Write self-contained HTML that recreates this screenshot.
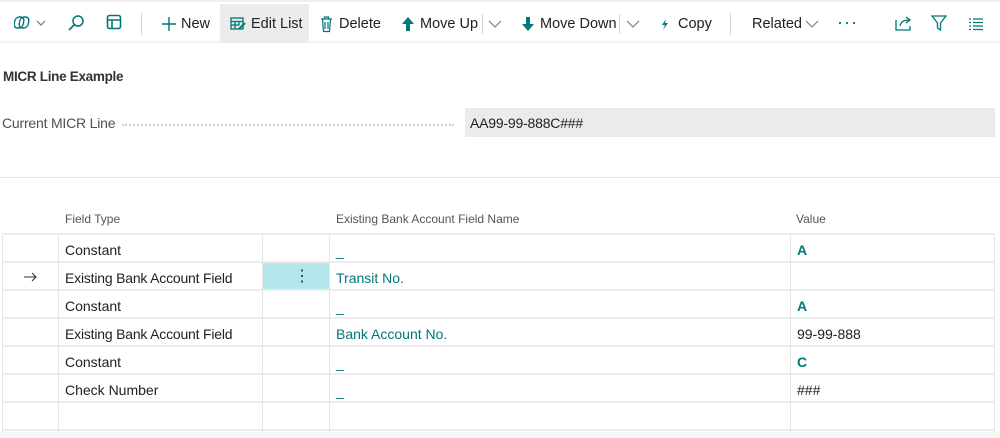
<!DOCTYPE html>
<html><head><meta charset="utf-8"><style>
*{margin:0;padding:0;box-sizing:border-box}
body{width:1000px;height:438px;overflow:hidden;background:#fff;font-family:"Liberation Sans",sans-serif;color:#212121;position:relative}
.a{position:absolute;white-space:nowrap}
.tb{position:absolute;left:0;top:0;width:1000px;height:43px;border-top:2px solid #f0f0f0;border-bottom:2px solid #f3f3f3}
.t{position:absolute;top:14px;font-size:14.5px;color:#212121}
.teal{color:#00777a}
.sep{position:absolute;top:11px;width:1px;height:22px;background:#d6d6d6}
.row{position:absolute;left:2px;width:993px;height:28px;border-bottom:2px solid #ededed}
</style></head><body>
<div class="tb">
 <svg class="a" style="left:14px;top:12px" width="34" height="18" viewBox="0 0 34 18"><g fill="none" stroke="#00777a" stroke-width="1.4"><rect x="2" y="3" width="9" height="11" rx="4" transform="skewX(-10)"/><rect x="7" y="3" width="9" height="11" rx="4" transform="skewX(-10)"/></g><path d="M23 7l4 4 4-4" fill="none" stroke="#777" stroke-width="1.2"/></svg>
 <svg class="a" style="left:67px;top:12px" width="18" height="18"><circle cx="11" cy="7" r="5" fill="none" stroke="#00777a" stroke-width="1.5"/><path d="M7.5 10.5L2 16" stroke="#00777a" stroke-width="1.6"/></svg>
 <svg class="a" style="left:106px;top:12px" width="16" height="17"><rect x="1.5" y="1.5" width="13" height="13" rx="2" fill="none" stroke="#00777a" stroke-width="1.6"/><path d="M1.5 6h13M6 6v8.5" stroke="#00777a" stroke-width="1.6"/></svg>
 <div class="sep" style="left:141px"></div>
 <svg class="a" style="left:161px;top:14px" width="16" height="16"><path d="M8 1v14M1 8h14" stroke="#00777a" stroke-width="1.4"/></svg>
 <div class="t" style="left:181px">New</div>
 <div class="a" style="left:220px;top:2px;width:89px;height:39px;background:#ececec"></div>
 <svg class="a" style="left:230px;top:15px" width="16" height="14"><g stroke="#00777a" stroke-width="1.3" fill="none"><rect x="1" y="1" width="12" height="11"/><path d="M1 4.5h12M1 8h8M5 4.5v7.5M9 4.5v4"/></g><path d="M9 12l6-6" stroke="#00777a" stroke-width="2"/></svg>
 <div class="t" style="left:251px">Edit List</div>
 <svg class="a" style="left:320px;top:14px" width="13" height="17"><g stroke="#00777a" stroke-width="1.2" fill="none"><path d="M1 3h11M4.5 3V1h4v2M2.5 3l1 12.5h6l1-12.5M5 6v7M8 6v7"/></g></svg>
 <div class="t" style="left:339px">Delete</div>
 <svg class="a" style="left:401px;top:14px" width="14" height="16"><path d="M7 1L1 8h4v7h4V8h4z" fill="#00777a"/></svg>
 <div class="t" style="left:420px">Move Up</div>
 <div class="sep" style="left:482px;top:12px;height:20px"></div>
 <svg class="a" style="left:488px;top:17px" width="14" height="10"><path d="M1 2l6 6 6-6" fill="none" stroke="#777" stroke-width="1.1"/></svg>
 <svg class="a" style="left:521px;top:14px" width="14" height="16"><path d="M7 15L1 8h4V1h4v7h4z" fill="#00777a"/></svg>
 <div class="t" style="left:540px">Move Down</div>
 <div class="sep" style="left:619px;top:12px;height:20px"></div>
 <svg class="a" style="left:626px;top:17px" width="14" height="10"><path d="M1 2l6 6 6-6" fill="none" stroke="#777" stroke-width="1.1"/></svg>
 <svg class="a" style="left:660px;top:16px" width="10" height="13"><path d="M6 1L2 7h3L3 12l5-7H5z" fill="#00777a"/></svg>
 <div class="t" style="left:678px">Copy</div>
 <div class="sep" style="left:730px"></div>
 <div class="t" style="left:752px">Related</div>
 <svg class="a" style="left:805px;top:17px" width="14" height="10"><path d="M1 2l6 6 6-6" fill="none" stroke="#777" stroke-width="1.1"/></svg>
 <svg class="a" style="left:838px;top:19px" width="18" height="4"><g fill="#00777a"><circle cx="2" cy="2" r="1.1"/><circle cx="9" cy="2" r="1.1"/><circle cx="16" cy="2" r="1.1"/></g></svg>
 <svg class="a" style="left:895px;top:13px" width="18" height="16"><g fill="none" stroke="#00777a" stroke-width="1.3"><path d="M1 5v10h14v-4"/><path d="M5 11c1-5 5-6 9-6M11 2l4 3-4 3"/></g></svg>
 <svg class="a" style="left:931px;top:13px" width="16" height="17"><path d="M1 1h14l-5.5 7v7l-3-2V8z" fill="none" stroke="#00777a" stroke-width="1.3"/></svg>
 <svg class="a" style="left:968px;top:16px" width="16" height="13"><g stroke="#00777a" stroke-width="1.2"><path d="M1 1h2M5 1h10M1 4.5h2M5 4.5h10M1 8h2M5 8h10M1 11.5h2M5 11.5h10"/></g></svg>
</div>

<div class="a" style="left:3px;top:69px;font-size:13.5px;font-weight:bold;color:#333;letter-spacing:-0.3px">MICR Line Example</div>
<div class="a" style="left:2px;top:115px;font-size:14px;color:#505050;letter-spacing:-0.2px">Current MICR Line</div>
<div class="a" style="left:122px;top:124px;width:332px;border-top:2px dotted #ccc"></div>
<div class="a" style="left:465px;top:108px;width:530px;height:29px;background:#ebebec"></div>
<div class="a" style="left:470px;top:115px;font-size:14px;letter-spacing:-0.2px">AA99-99-888C###</div>
<div class="a" style="left:0;top:177px;width:1000px;height:1px;background:#e3e3e3"></div>

<div class="a" style="left:65px;top:212px;font-size:12px;color:#555">Field Type</div>
<div class="a" style="left:336px;top:212px;font-size:12px;color:#555">Existing Bank Account Field Name</div>
<div class="a" style="left:796px;top:212px;font-size:12px;color:#555">Value</div>

<div class="a" style="left:2px;top:233px;width:993px;height:2px;background:#ededed"></div>
<div class="a" style="left:0;top:432px;width:1000px;height:6px;background:#f6f6f6"></div>
<div class="a" style="left:262px;top:263px;width:67px;height:28px;background:#b4e7eb"></div>
<div class="a" style="left:294px;top:266px;font-size:16px;color:#333">⋮</div>

<div class="row" style="top:235px"></div><div class="row" style="top:263px"></div><div class="row" style="top:291px"></div><div class="row" style="top:319px"></div><div class="row" style="top:347px"></div><div class="row" style="top:375px"></div><div class="row" style="top:403px"></div>
<div class="a" style="left:2px;top:235px;width:1px;height:197px;background:#e6e6e6"></div>
<div class="a" style="left:58px;top:235px;width:1px;height:197px;background:#e6e6e6"></div>
<div class="a" style="left:262px;top:235px;width:1px;height:197px;background:#e6e6e6"></div>
<div class="a" style="left:329px;top:235px;width:1px;height:197px;background:#e6e6e6"></div>
<div class="a" style="left:790px;top:235px;width:1px;height:197px;background:#e6e6e6"></div>
<div class="a" style="left:994px;top:235px;width:1px;height:197px;background:#e6e6e6"></div>

<svg class="a" style="left:23px;top:272px" width="14" height="10"><path d="M1 5h12M9 1l4 4-4 4" fill="none" stroke="#333" stroke-width="1.1"/></svg>
<div class="a" style="left:65px;top:242px;font-size:14px">Constant</div>
<div class="a" style="left:65px;top:270px;font-size:14px;letter-spacing:-0.2px">Existing Bank Account Field</div>
<div class="a" style="left:65px;top:298px;font-size:14px">Constant</div>
<div class="a" style="left:65px;top:326px;font-size:14px;letter-spacing:-0.2px">Existing Bank Account Field</div>
<div class="a" style="left:65px;top:354px;font-size:14px">Constant</div>
<div class="a" style="left:65px;top:382px;font-size:14px">Check Number</div>

<div class="a teal" style="left:336px;top:243px;font-size:14px">_</div>
<div class="a teal" style="left:336px;top:270px;font-size:14px">Transit No.</div>
<div class="a teal" style="left:336px;top:299px;font-size:14px">_</div>
<div class="a teal" style="left:336px;top:326px;font-size:14px">Bank Account No.</div>
<div class="a teal" style="left:336px;top:355px;font-size:14px">_</div>
<div class="a teal" style="left:336px;top:383px;font-size:14px">_</div>

<div class="a teal" style="left:797px;top:242px;font-size:14px;font-weight:bold">A</div>
<div class="a teal" style="left:797px;top:298px;font-size:14px;font-weight:bold">A</div>
<div class="a" style="left:797px;top:326px;font-size:14px">99-99-888</div>
<div class="a teal" style="left:797px;top:354px;font-size:14px;font-weight:bold">C</div>
<div class="a" style="left:797px;top:382px;font-size:14px">###</div>
</body></html>
